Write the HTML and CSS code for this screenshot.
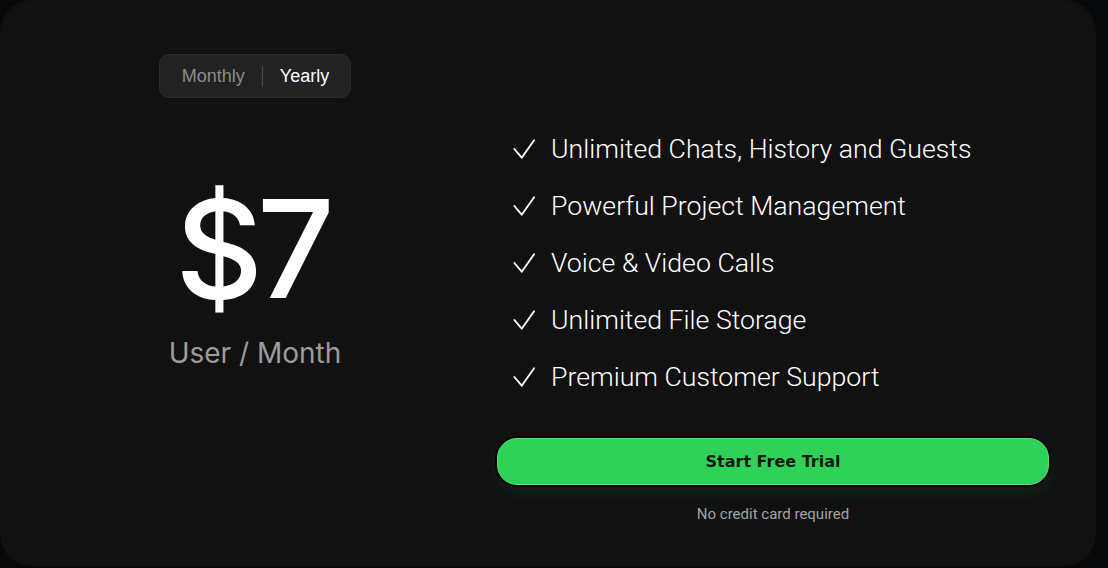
FILE: index.html
```html
<!DOCTYPE html>
<html lang="en">
<head>
<meta charset="utf-8">
<title>Pricing</title>
<link rel="stylesheet" href="styles.css">
</head>
<body>
<main class="card">
  <section class="left">
    <div class="toggle">
      <span class="opt">Monthly</span>
      <span class="divider"></span>
      <span class="opt active">Yearly</span>
    </div>
    <div class="price">$7</div>
    <div class="per">User / Month</div>
  </section>
  <section class="right">
    <ul class="features">
      <li><svg class="check" viewBox="0 0 24 24"><polyline points="1.5,12 9.5,21.5 23,2.5"/></svg><span>Unlimited Chats, History and Guests</span></li>
      <li><svg class="check" viewBox="0 0 24 24"><polyline points="1.5,12 9.5,21.5 23,2.5"/></svg><span>Powerful Project Management</span></li>
      <li><svg class="check" viewBox="0 0 24 24"><polyline points="1.5,12 9.5,21.5 23,2.5"/></svg><span>Voice &amp; Video Calls</span></li>
      <li><svg class="check" viewBox="0 0 24 24"><polyline points="1.5,12 9.5,21.5 23,2.5"/></svg><span>Unlimited File Storage</span></li>
      <li><svg class="check" viewBox="0 0 24 24"><polyline points="1.5,12 9.5,21.5 23,2.5"/></svg><span>Premium Customer Support</span></li>
    </ul>
    <button class="cta">Start Free Trial</button>
    <p class="note">No credit card required</p>
  </section>
</main>
</body>
</html>
```

FILE: styles.css
```css
html, body {
  margin: 0;
  padding: 0;
  background: #070809;
}

.card {
  box-sizing: border-box;
  width: 1096px;
  height: 566px;
  background: #111111;
  border-radius: 32px;
  display: grid;
  grid-template-columns: 390px 552px;
  column-gap: 47px;
  padding: 0 47px 0 60px;
}

.left {
  display: flex;
  flex-direction: column;
  align-items: center;
  padding-top: 54px;
}

.toggle {
  box-sizing: border-box;
  height: 44px;
  display: flex;
  align-items: center;
  padding: 0 21px 0 22px;
  background: #222223;
  border: 1px solid #2a2a2b;
  border-radius: 10px;
  font-family: "Liberation Sans", Arial, sans-serif;
  font-size: 18px;
}

.opt {
  color: #8c8c8c;
}

.opt.active {
  color: #ffffff;
}

.divider {
  width: 1px;
  height: 21px;
  background: #4a4a4a;
  margin: 0 17px;
}

.price {
  margin-top: 82px;
  font-family: Inter, "Liberation Sans", sans-serif;
  font-weight: 500;
  font-size: 136px;
  line-height: 137px;
  height: 137px;
  color: #ffffff;
  letter-spacing: -6px;
  padding-right: 6px;
}

.per {
  margin-top: 22px;
  font-family: Inter, "Liberation Sans", sans-serif;
  font-weight: 400;
  font-size: 28px;
  line-height: 28px;
  color: #9c9c9c;
}

.right {
  display: flex;
  flex-direction: column;
  padding-top: 120px;
}

.features {
  list-style: none;
  margin: 0;
  padding: 0 0 0 15px;
}

.features li {
  display: flex;
  align-items: center;
  gap: 15px;
  height: 57px;
  font-family: Roboto, "Liberation Sans", sans-serif;
  font-weight: 300;
  font-size: 26.7px;
  color: #ffffff;
}

.check {
  width: 24px;
  height: 22px;
  flex: none;
  fill: none;
  stroke: #ffffff;
  stroke-width: 2;
  stroke-linecap: round;
  stroke-linejoin: round;
}

.cta {
  margin-top: 33px;
  height: 47px;
  width: 100%;
  box-sizing: border-box;
  background: #30d158;
  border: 1px solid #4be872;
  border-radius: 20px;
  box-shadow: 0 0 0 2px #060606, 0 6px 18px rgba(48, 209, 88, 0.10);
  font-family: "DejaVu Sans", Inter, sans-serif;
  font-weight: 700;
  font-size: 16px;
  color: #0b1a0f;
  cursor: pointer;
}

.note {
  margin: 20px 0 0;
  text-align: center;
  font-family: Roboto, "Liberation Sans", sans-serif;
  font-size: 15px;
  color: #a3a3a3;
}
```
